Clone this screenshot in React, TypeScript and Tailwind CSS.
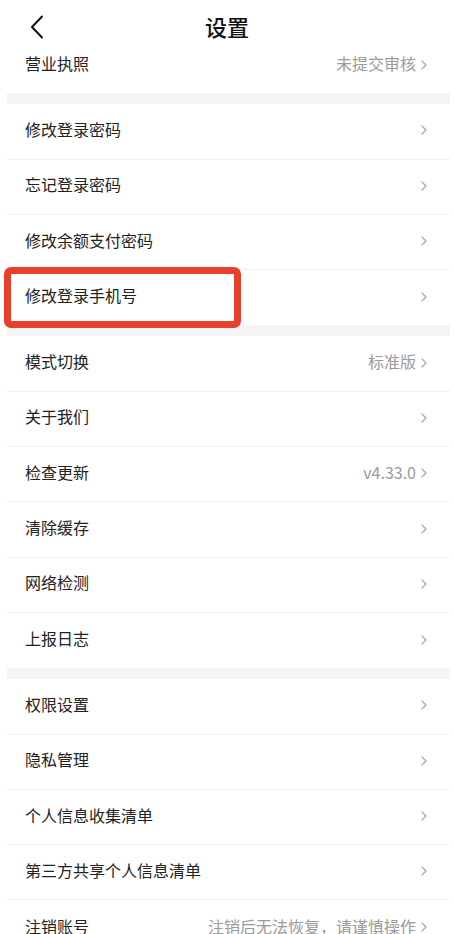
import type { ReactNode } from 'react';

type Item = { label: string; value?: string; highlight?: boolean };

const groups: Item[][] = [
  [{ label: '修改登录密码' }, { label: '忘记登录密码' }, { label: '修改余额支付密码' }, { label: '修改登录手机号', highlight: true }],
  [
    { label: '模式切换', value: '标准版' },
    { label: '关于我们' },
    { label: '检查更新', value: 'v4.33.0' },
    { label: '清除缓存' },
    { label: '网络检测' },
    { label: '上报日志' },
  ],
  [
    { label: '权限设置' },
    { label: '隐私管理' },
    { label: '个人信息收集清单' },
    { label: '第三方共享个人信息清单' },
    { label: '注销账号', value: '注销后无法恢复，请谨慎操作' },
  ],
];

function Chevron() {
  return (
    <svg width="6" height="10" viewBox="0 0 6 10" className="mt-[3px] shrink-0">
      <path d="M1 1l4 4-4 4" fill="none" stroke="#a8a8a8" strokeWidth="1.2" strokeLinecap="round" strokeLinejoin="round" />
    </svg>
  );
}

function Row({ item, last }: { item: Item; last?: boolean }): ReactNode {
  return (
    <div className={`relative flex h-[55.3px] items-center justify-between pb-[5px] pl-[18px] pr-[23px] ${last ? '' : 'border-b border-[#f0f0f0]'}`}>
      <span className="text-[16px] leading-[22px] text-[#222]">{item.label}</span>
      <div className="flex items-center gap-[5px]">
        {item.value && <span className="text-[16px] leading-[22px] text-[#9a9a9a]">{item.value}</span>}
        <Chevron />
      </div>
      {item.highlight && (
        <div className="pointer-events-none absolute left-[-3.5px] top-[-3.5px] h-[61px] w-[237px] rounded-[7px] border-[7px] border-[#e8402a]" />
      )}
    </div>
  );
}

export default function App() {
  return (
    <div className="h-[934px] overflow-hidden bg-white font-['Noto_Sans_CJK_SC','Noto_Sans',sans-serif]">
      <div className="relative flex h-[38px] justify-center">
        <svg width="14" height="24" viewBox="0 0 14 24" className="absolute left-[30px] top-[15px]">
          <path d="M12 1.5L2 12l10 10.5" fill="none" stroke="#111" strokeWidth="2" strokeLinecap="round" strokeLinejoin="round" />
        </svg>
        <h1 className="pt-[11px] text-[22px] leading-[30px] font-medium text-[#111]">设置</h1>
      </div>
      <div className="mx-[7px] w-[443px]">
        <Row item={{ label: '营业执照', value: '未提交审核' }} last />
        {groups.map((g, gi) => (
          <div key={gi}>
            <div className="h-[11px] bg-[#f5f5f5]" />
            {g.map((item, i) => (
              <Row key={item.label} item={item} last={i === g.length - 1} />
            ))}
          </div>
        ))}
      </div>
    </div>
  );
}
